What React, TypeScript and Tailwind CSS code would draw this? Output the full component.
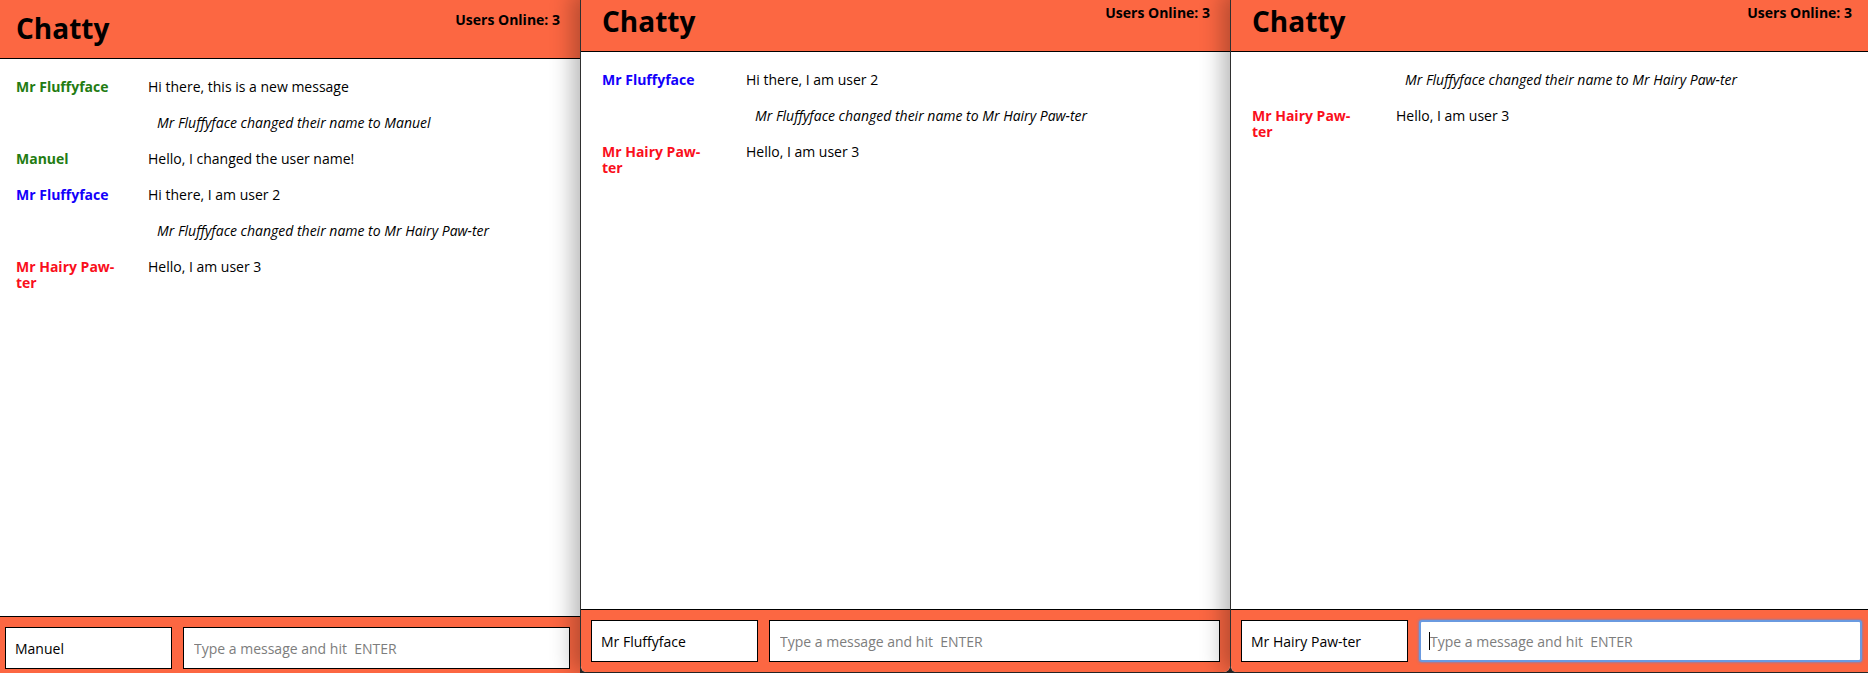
import React from "react";

type Msg =
  | { kind: "user"; name: string; color: string; text: string }
  | { kind: "system"; text: string };

const m1: Msg = { kind: "user", name: "Mr Fluffyface", color: "text-[#237c12]", text: "Hi there, this is a new message" };
const m2: Msg = { kind: "system", text: "Mr Fluffyface changed their name to Manuel" };
const m3: Msg = { kind: "user", name: "Manuel", color: "text-[#237c12]", text: "Hello, I changed the user name!" };
const m4: Msg = { kind: "user", name: "Mr Fluffyface", color: "text-[#1300fb]", text: "Hi there, I am user 2" };
const m5: Msg = { kind: "system", text: "Mr Fluffyface changed their name to Mr Hairy Paw-ter" };
const m6: Msg = { kind: "user", name: "Mr Hairy Paw-ter", color: "text-[#fa0f1c]", text: "Hello, I am user 3" };

type WinProps = {
  cls: string;
  messages: Msg[];
  msgMargin: string;
  sysPad: string;
  username: string;
  focused?: boolean;
};

function ChatWindow({ cls, messages, msgMargin, sysPad, username, focused }: WinProps) {
  return (
    <div className={`relative shrink-0 h-[679px] flex flex-col bg-white border-l border-[#2f2f2f] ${cls}`}>
      <div className="h-[59px] shrink-0 border-b border-black bg-[#fc6742] flex justify-between items-start pt-[10px] pl-[21px] pr-[20px]">
        <h1 className="text-[28px] leading-[36px] font-bold text-black">Chatty</h1>
        <span className="text-[14px] leading-[20px] font-bold text-black">Users Online: 3</span>
      </div>
      <div className="flex-1 pt-[10px] pl-[21px] pr-[20px] text-[14px] leading-[16px] text-black">
        {messages.map((m, i) =>
          m.kind === "user" ? (
            <div key={i} className="flex py-[10px]">
              <span className={`w-[110px] shrink-0 font-bold ${m.color}`}>{m.name}</span>
              <span className={msgMargin}>{m.text}</span>
            </div>
          ) : (
            <div key={i} className={`py-[10px] italic ${sysPad}`}>
              {m.text}
            </div>
          )
        )}
      </div>
      <div className="h-[63px] shrink-0 border-t border-black bg-[#fc6742] flex gap-[11px] pt-[10px] pl-[10px] pr-[10px]">
        <input
          readOnly
          value={username}
          className="w-[167px] h-[42px] shrink-0 bg-white border border-black px-[9px] text-[14px] text-black outline-none"
        />
        <div className="relative flex-1 h-[42px]">
          <input
            readOnly
            placeholder="Type a message and hit  ENTER"
            className={
              focused
                ? "w-full h-full bg-white border-2 border-[#6a9ae0] rounded-[3px] shadow-[0_0_2px_1px_rgba(90,140,225,0.55)] px-[9px] text-[14px] outline-none placeholder:text-[#7d7d7d]"
                : "w-full h-full bg-white border border-black px-[10px] text-[14px] outline-none placeholder:text-[#7d7d7d]"
            }
          />
          {focused ? <span className="absolute left-[10px] top-[12px] w-px h-[18px] bg-black" /> : null}
        </div>
      </div>
    </div>
  );
}

export default function App() {
  return (
    <div className="w-[1868px] h-[673px] overflow-hidden flex items-start bg-[#2a2a2a] font-['Open_Sans',sans-serif]">
      <ChatWindow
        cls="w-[586px] ml-[-6px] z-0"
        messages={[m1, m2, m3, m4, m5, m6]}
        msgMargin="ml-[22px]"
        sysPad="pl-[141px]"
        username="Manuel"
      />
      <ChatWindow
        cls="w-[650px] mt-[-7px] z-10 rounded-b-[6px] overflow-hidden shadow-[-8px_0_22px_rgba(0,0,0,0.28)]"
        messages={[m4, m5, m6]}
        msgMargin="ml-[34px]"
        sysPad="pl-[153px]"
        username="Mr Fluffyface"
      />
      <ChatWindow
        cls="w-[642px] mt-[-7px] z-20 rounded-b-[6px] overflow-hidden shadow-[-8px_0_22px_rgba(0,0,0,0.28)]"
        messages={[m5, m6]}
        msgMargin="ml-[34px]"
        sysPad="pl-[153px]"
        username="Mr Hairy Paw-ter"
        focused
      />
    </div>
  );
}
